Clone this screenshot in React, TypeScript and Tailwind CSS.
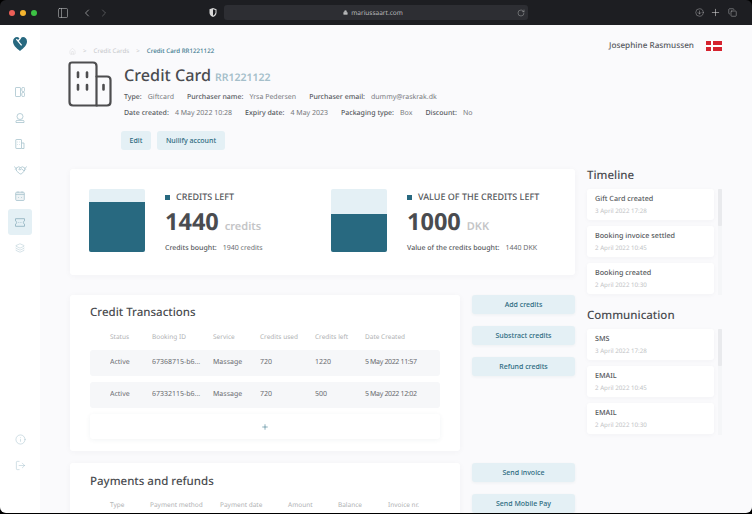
import React from 'react';
import { ChevronLeft, ChevronRight, Copy, Home, Info, Layers, Lock, LogOut, Plus, RotateCw, CircleArrowDown, PanelLeft } from 'lucide-react';

const ActionButton = ({ label }: { label: string }) => (
  <button className="h-[19px] w-full rounded-[3px] bg-[#e4f0f5] pt-[1px] text-[7px] font-medium text-[#2b6a80] shadow-[0_1px_3px_rgba(40,80,100,0.06)]">{label}</button>
);

const Meta = ({ label, value }: { label: string; value: string }) => (
  <span className="flex gap-[6px]">
    <span className="font-medium text-[#55585c]">{label}</span>
    <span className="text-[#77797c]">{value}</span>
  </span>
);

const FeedList = ({ title, items }: { title: string; items: string[][] }) => (
  <div>
    <h2 className="mb-[6px] pt-[1px] text-[11.5px] leading-[15px] font-medium text-[#4a4c50]">{title}</h2>
    <div className="flex gap-[4px]">
      <div className="flex w-[127px] flex-col gap-[6px]">
        {items.map(([name, date]) => (
          <div key={name + date} className="h-[31px] rounded-[3px] bg-white px-[8px] pt-[5px] shadow-[0_1px_4px_rgba(40,60,80,0.04)]">
            <div className="text-[7.2px] leading-[10px] font-medium text-[#55585c]">{name}</div>
            <div className="mt-[3px] text-[6.2px] leading-[8px] text-[#c2c4c6]">{date}</div>
          </div>
        ))}
      </div>
      <div className="h-[106px] w-[4px] bg-[#f5f6f8]">
        <div className="h-[37px] w-[4px] rounded-[1px] bg-[#e9eaed]" />
      </div>
    </div>
  </div>
);

const BarChart = ({ fill }: { fill: string }) => (
  <div className="flex h-[63px] w-[56px] flex-col justify-end overflow-hidden rounded-[2px] bg-[#e4f0f5]">
    <div className={`${fill} bg-[#286980]`} />
  </div>
);

const Stat = ({ title, value, unit, label, total, fill }: { title: string; value: string; unit: string; label: string; total: string; fill: string }) => (
  <div className="flex items-start gap-[20px]">
    <BarChart fill={fill} />
    <div className="pt-[1px]">
      <div className="flex h-[14px] items-center gap-[6px] text-[9px] font-medium text-[#55585c]">
        <span className="h-[5px] w-[5px] bg-[#286980]" />
        {title}
      </div>
      <div className="mt-[3px] flex h-[29px] items-baseline gap-[6px]">
        <span className="text-[23.5px] leading-[29px] font-bold text-[#4a4c50]">{value}</span>
        <span className="text-[11px] font-semibold text-[#c4c5c7]">{unit}</span>
      </div>
      <div className="mt-[8px] flex gap-[6px] text-[7px] leading-[10px]">
        <span className="font-medium text-[#55585c]">{label}</span>
        <span className="text-[#6a6c70]">{total}</span>
      </div>
    </div>
  </div>
);

const Row = ({ cells }: { cells: string[] }) => (
  <div className="grid h-[26px] grid-cols-[42px_61px_47px_55px_50px_1fr] items-center rounded-[3px] bg-[#f6f7f9] pt-[1px] pl-[20px] text-[7px] text-[#6a6c70]">
    {cells.map((c, i) => (
      <span key={c} className={i === 5 ? 'tracking-[-0.05em] whitespace-nowrap' : 'truncate'}>{c}</span>
    ))}
  </div>
);

const SideIcon = ({ children, active }: { children: React.ReactNode; active?: boolean }) => (
  <div className={`flex h-[26px] w-[24px] items-center justify-center rounded-[3px] text-[#9cbbc7] ${active ? 'bg-[#e4f0f5] text-[#4f8599]' : ''}`}>{children}</div>
);

const Logo = () => (
  <svg width="14" height="14" viewBox="0 0 14 14">
    <path d="M7 14 C3 11 0 8 0 4.5 C0 1.5 2 0 4 0 C5.5 0 6.5 1 7 2 C7.5 1 8.8 0 10 0 C12 0 14 1.5 14 4.5 C14 8 11 11 7 14Z" fill="#286980" />
    <path d="M3.4 2.2 L8.6 8.4 M7.6 1 L5.4 3.6" stroke="#fff" strokeWidth="1.3" fill="none" />
  </svg>
);

const BuildingIcon = () => (
  <svg width="44" height="46" viewBox="0 0 44 46" fill="none" stroke="#4d4d4f" strokeWidth="2.2" strokeLinecap="round">
    <path d="M4 1.5 H25 Q28.5 1.5 28.5 5 V44.5 H5 Q1.5 44.5 1.5 41 V4 Q1.5 1.5 4 1.5Z" />
    <path d="M28.5 15.5 H39 Q42.5 15.5 42.5 19 V41 Q42.5 44.5 39 44.5 H28.5" />
    <path d="M10 11.5 V16 M19 11.5 V16 M10 24 V28.5 M19 24 V28.5 M35.5 24 V28.5" strokeWidth="2.6" />
  </svg>
);

const HandshakeIcon = () => (
  <svg width="13" height="10" viewBox="0 0 13 10" fill="none" stroke="currentColor" strokeWidth=".7" strokeLinejoin="round">
    <path d="M.3 1.4 L2 3.6 L1.2 4.6 M12.7 1.4 L11 3.6 L11.8 4.6" />
    <path d="M2 3.2 L4.6 1.8 L6.5 2.6 L8.6 1.8 L11 3.2 L10.4 6 L7 9.2 L5.6 8.6 L2.6 6Z" />
    <path d="M6.5 2.6 L4.8 4.4 L6 5 L7.6 3.8 L10.2 6" />
  </svg>
);

const App = () => {
  return (
    <div className="h-[514px] w-[752px] overflow-hidden bg-black font-['Noto_Sans',sans-serif] antialiased [text-rendering:geometricPrecision]">
      <div className="flex h-[513px] flex-col overflow-hidden rounded-[6px]">
        {/* browser chrome */}
        <div className="flex h-[25px] shrink-0 items-center bg-[#1d1e22] text-[#b9babc]">
          <div className="ml-[9px] flex gap-[5px]">
            <span className="h-[6px] w-[6px] rounded-full bg-[#ed5f57]" />
            <span className="h-[6px] w-[6px] rounded-full bg-[#f4b42f]" />
            <span className="h-[6px] w-[6px] rounded-full bg-[#3cc244]" />
          </div>
          <PanelLeft size={12} strokeWidth={1.2} className="ml-[20px]" />
          <ChevronLeft size={12} strokeWidth={1.4} className="ml-[12px]" />
          <ChevronRight size={12} strokeWidth={1.4} className="ml-[5px] text-[#6c6d70]" />
          <svg width="8" height="9" viewBox="0 0 8 9" className="ml-[99px]">
            <path d="M4 0 L7.5 1.2 V4.5 Q7.5 7.5 4 9 Q.5 7.5 .5 4.5 V1.2Z" fill="#d8d8d8" />
            <path d="M4 1.2 L6.5 2 V4.5 Q6.5 6.6 4 7.8Z" fill="#1d1e22" />
          </svg>
          <div className="ml-[7px] flex h-[15px] w-[304px] items-center rounded-[3px] bg-[#2d2e33] pr-[3px]">
            <span className="flex flex-1 items-center justify-center gap-[3px] pl-[5px] text-[6.5px] text-[#b9babc]">
              <Lock size={5} fill="currentColor" />
              mariussaart.com
            </span>
            <RotateCw size={8} strokeWidth={1.3} />
          </div>
          <CircleArrowDown size={9} strokeWidth={1.2} className="ml-[167px]" />
          <Plus size={11} strokeWidth={1.2} className="ml-[6px] text-[#e0e0e0]" />
          <Copy size={9} strokeWidth={1.3} className="ml-[7px]" />
        </div>

        <div className="flex min-h-0 flex-1">
          {/* sidebar */}
          <div className="flex w-[40px] shrink-0 flex-col items-center bg-white pt-[12px] pb-[35px]">
            <Logo />
            <div className="mt-[28px] flex flex-col">
              <SideIcon>
                <svg width="10" height="10" viewBox="0 0 10 10" fill="none" stroke="currentColor" strokeWidth=".7">
                  <rect x=".5" y=".5" width="5" height="9" rx=".6" />
                  <rect x="6.8" y=".5" width="2.8" height="4" rx="1" />
                  <rect x="6.8" y="5.5" width="2.8" height="4" rx="1" />
                </svg>
              </SideIcon>
              <SideIcon>
                <svg width="10" height="10" viewBox="0 0 10 10" fill="none" stroke="currentColor" strokeWidth=".7">
                  <circle cx="5" cy="3.5" r="3" />
                  <path d="M1 9.5 V8.3 Q1 7.4 2 7.4 H8 Q9 7.4 9 8.3 V9.5Z" />
                </svg>
              </SideIcon>
              <SideIcon>
                <svg width="10" height="10" viewBox="0 0 10 10" fill="none" stroke="currentColor" strokeWidth=".7">
                  <rect x=".8" y=".5" width="5.7" height="9" rx=".5" />
                  <path d="M6.5 4 H9 V9.5 H6.5 M2.5 3 H3 M4.3 3 H4.8 M2.5 5.5 H3 M4.3 5.5 H4.8" />
                </svg>
              </SideIcon>
              <SideIcon><HandshakeIcon /></SideIcon>
              <SideIcon>
                <svg width="10" height="10" viewBox="0 0 10 10" fill="none" stroke="currentColor" strokeWidth=".7">
                  <rect x=".7" y="1.2" width="8.6" height="8.3" rx="1" fill="#eef3f5" />
                  <path d="M.7 3.4 H9.3 M3 .3 V1.8 M7 .3 V1.8 M3 6.5 H3.8 M6.2 6.5 H7" />
                </svg>
              </SideIcon>
              <SideIcon active>
                <svg width="10" height="9" viewBox="0 0 10 9" fill="none" stroke="currentColor" strokeWidth="1">
                  <path d="M.5 .7 H9.5 V2.9 Q8.4 3.2 8.4 4.5 Q8.4 5.8 9.5 6.1 V8.3 H.5 V6.1 Q1.6 5.8 1.6 4.5 Q1.6 3.2 .5 2.9Z" />
                  <path d="M3.5 4.5 H4.2 M5.6 4.5 H6.3" />
                </svg>
              </SideIcon>
              <SideIcon><Layers size={10} strokeWidth={1} /></SideIcon>
            </div>
            <div className="mt-auto flex flex-col">
              <SideIcon><Info size={11} strokeWidth={1} /></SideIcon>
              <SideIcon><LogOut size={11} strokeWidth={1} /></SideIcon>
            </div>
          </div>

          {/* page */}
          <div className="min-w-0 flex-1 overflow-hidden bg-[#fafafc] pl-[30px]">
            <div className="h-[144px]">
              <div className="flex h-[36px] items-start justify-between pt-[15px] pr-[30px]">
                <div className="-ml-[1px] flex items-center gap-[7px] pt-[6px] text-[6.2px] leading-[10px] text-[#c6c8ca]">
                  <Home size={7} strokeWidth={1} />
                  <span>&gt;</span>
                  <span>Credit Cards</span>
                  <span>&gt;</span>
                  <span className="font-medium text-[#3f7a90]">Credit Card RR1221122</span>
                </div>
                <div className="flex items-center gap-[12px]">
                  <span className="text-[8.2px] leading-[12px] font-medium text-[#55585c]">Josephine Rasmussen</span>
                  <div className="grid h-[10px] w-[16px] grid-cols-[5px_2px_9px] grid-rows-[4px_2px_4px] bg-white">
                    <span className="bg-[#d5232f]" /><span /><span className="bg-[#d5232f]" />
                    <span /><span /><span />
                    <span className="bg-[#d5232f]" /><span /><span className="bg-[#d5232f]" />
                  </div>
                </div>
              </div>
              <div className="-ml-[2px] flex items-start gap-[12px]">
                <BuildingIcon />
                <div>
                  <h1 className="mt-[2px] flex h-[24px] items-baseline gap-[4px] text-[16.2px] leading-[24px] font-medium text-[#4a4c50]">
                    Credit Card <span className="text-[10.5px] font-semibold text-[#a5bfca]">RR1221122</span>
                  </h1>
                  <div className="mt-[3px] flex h-[16px] items-center gap-[13px] text-[7px]">
                    <Meta label="Type:" value="Giftcard" />
                    <Meta label="Purchaser name:" value="Yrsa Pedersen" />
                    <Meta label="Purchaser email:" value="dummy@raskrak.dk" />
                  </div>
                  <div className="flex h-[16px] items-center gap-[13px] text-[7px]">
                    <Meta label="Date created:" value="4 May 2022 10:28" />
                    <Meta label="Expiry date:" value="4 May 2023" />
                    <Meta label="Packaging type:" value="Box" />
                    <Meta label="Discount:" value="No" />
                  </div>
                  <div className="mt-[9px] -ml-[3px] flex gap-[6px]">
                    <button className="h-[19px] w-[30px] rounded-[3px] bg-[#e4f0f5] pt-[1px] text-[7px] font-medium text-[#2b6a80]">Edit</button>
                    <button className="h-[19px] w-[68px] rounded-[3px] bg-[#e4f0f5] pt-[1px] text-[7px] font-medium text-[#2b6a80]">Nullify account</button>
                  </div>
                </div>
              </div>
            </div>

            <div className="flex gap-[12px]">
              <div className="w-[505px] shrink-0">
                <div className="flex h-[106px] gap-[41px] rounded-[3px] bg-white pt-[20px] pl-[19px] shadow-[0_1px_6px_rgba(40,60,80,0.04)]">
                  <div className="w-[201px]">
                    <Stat title="CREDITS LEFT" value="1440" unit="credits" label="Credits bought:" total="1940 credits" fill="h-[50px]" />
                  </div>
                  <Stat title="VALUE OF THE CREDITS LEFT" value="1000" unit="DKK" label="Value of the credits bought:" total="1440 DKK" fill="h-[38px]" />
                </div>

                <div className="mt-[20px] flex gap-[12px]">
                  <div className="h-[156px] w-[390px] rounded-[3px] bg-white px-[20px] pt-[9px] shadow-[0_1px_6px_rgba(40,60,80,0.04)]">
                    <h2 className="text-[11.5px] leading-[17px] font-medium text-[#4a4c50]">Credit Transactions</h2>
                    <div className="mt-[8px] grid h-[16px] grid-cols-[42px_61px_47px_55px_50px_1fr] items-center pl-[20px] text-[6.5px] text-[#b0b2b4]">
                      <span>Status</span><span>Booking ID</span><span>Service</span><span>Credits used</span><span>Credits left</span><span>Date Created</span>
                    </div>
                    <div className="mt-[5px] flex flex-col gap-[6px]">
                      <Row cells={['Active', '67368715-b6...', 'Massage', '720', '1220', '5 May 2022 11:57']} />
                      <Row cells={['Active', '67332115-b6...', 'Massage', '720', '500', '5 May 2022 12:02']} />
                      <div className="flex h-[25px] items-center justify-center rounded-[3px] bg-white text-[#286980] shadow-[0_1px_5px_rgba(40,60,80,0.06)]">
                        <Plus size={8} strokeWidth={1.6} />
                      </div>
                    </div>
                  </div>
                  <div className="flex w-[103px] flex-col gap-[12px]">
                    <ActionButton label="Add credits" />
                    <ActionButton label="Substract credits" />
                    <ActionButton label="Refund credits" />
                  </div>
                </div>

                <div className="mt-[12px] flex gap-[12px]">
                  <div className="h-[80px] w-[390px] rounded-[3px] bg-white px-[20px] pt-[10px] shadow-[0_1px_6px_rgba(40,60,80,0.04)]">
                    <h2 className="text-[11.5px] leading-[17px] font-medium text-[#4a4c50]">Payments and refunds</h2>
                    <div className="mt-[7px] grid h-[16px] grid-cols-[40px_70px_68px_50px_50px_1fr] items-center pl-[20px] text-[6.5px] text-[#b0b2b4]">
                      <span>Type</span><span>Payment method</span><span>Payment date</span><span>Amount</span><span>Balance</span><span>Invoice nr.</span>
                    </div>
                  </div>
                  <div className="flex w-[103px] flex-col gap-[12px]">
                    <ActionButton label="Send invoice" />
                    <ActionButton label="Send Mobile Pay" />
                  </div>
                </div>
              </div>

              <div className="-mt-[2px] flex flex-col gap-[12px]">
                <FeedList title="Timeline" items={[['Gift Card created', '3 April 2022 17:28'], ['Booking invoice settled', '2 April 2022 10:45'], ['Booking created', '2 April 2022 10:30']]} />
                <FeedList title="Communication" items={[['SMS', '3 April 2022 17:28'], ['EMAIL', '2 April 2022 10:45'], ['EMAIL', '2 April 2022 10:30']]} />
              </div>
            </div>
          </div>
        </div>
      </div>
    </div>
  );
};

export default App;
